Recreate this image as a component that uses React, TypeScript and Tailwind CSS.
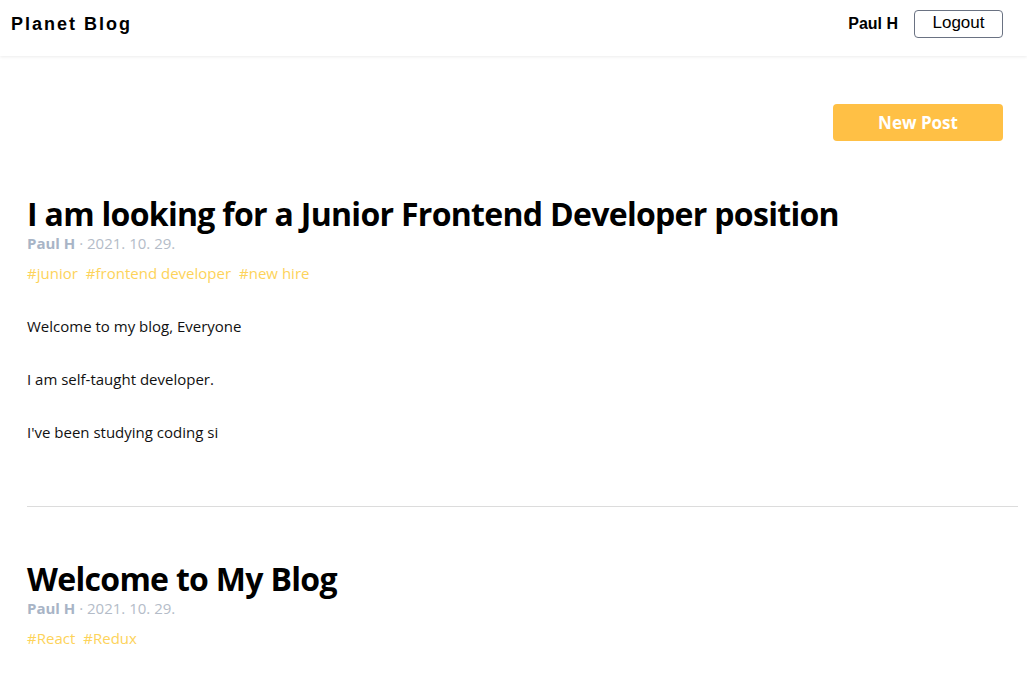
const posts = [
  {
    title: "I am looking for a Junior Frontend Developer position",
    author: "Paul H",
    date: "2021. 10. 29.",
    tags: ["junior", "frontend developer", "new hire"],
    body: ["Welcome to my blog, Everyone", "I am self-taught developer.", "I've been studying coding si"],
  },
  {
    title: "Welcome to My Blog",
    author: "Paul H",
    date: "2021. 10. 29.",
    tags: ["React", "Redux"],
    body: [],
  },
];

function Header() {
  return (
    <header className="h-14 flex items-center justify-between pl-[11px] pr-6 pb-2 bg-white shadow-[0_1px_3px_rgba(0,0,0,0.08)]">
      <div className="text-[18px] font-bold tracking-[2px] text-black font-['Liberation_Sans',sans-serif]">Planet Blog</div>
      <div className="flex items-center">
        <span className="text-[16px] font-bold text-black mr-4 font-['Liberation_Sans',sans-serif]">Paul H</span>
        <button className="w-[89px] h-[28px] border border-gray-500 rounded text-[17px] text-black font-['Liberation_Sans',sans-serif] leading-none pb-1">
          Logout
        </button>
      </div>
    </header>
  );
}

export default function App() {
  return (
    <div className="min-h-screen bg-white font-['Open_Sans',sans-serif]">
      <Header />
      <main className="pl-[27px] pr-[9px]">
        <div className="flex justify-end pr-[15px] pt-12">
          <button className="w-[170px] h-[37px] bg-[#ffc045] rounded text-white font-bold text-[17px]">New Post</button>
        </div>
        {posts.map((p, i) => (
          <article key={i} className={i > 0 ? "border-t border-[#dcdcdc] pt-[52px]" : "pt-[53px]"}>
            <h2 className="text-[32px] font-bold text-black leading-[40px] tracking-[-0.7px]">{p.title}</h2>
            <div className="text-[15px] leading-5 -mt-[1px]">
              <span className="font-bold text-[#a8b4c6]">{p.author}</span>
              <span className="text-[#b4bcc8]"> · {p.date}</span>
            </div>
            <div className="flex gap-2 mt-[10px] text-[15px] leading-5 text-[#fdd35a]">
              {p.tags.map((t) => (
                <span key={t}>#{t}</span>
              ))}
            </div>
            {p.body.length > 0 && (
              <div className="mt-[33px] pb-[64px] text-[15px] leading-5 text-[#111]">
                {p.body.map((b, j) => (
                  <p key={j} className={j > 0 ? "mt-[33px]" : ""}>{b}</p>
                ))}
              </div>
            )}
          </article>
        ))}
      </main>
    </div>
  );
}
